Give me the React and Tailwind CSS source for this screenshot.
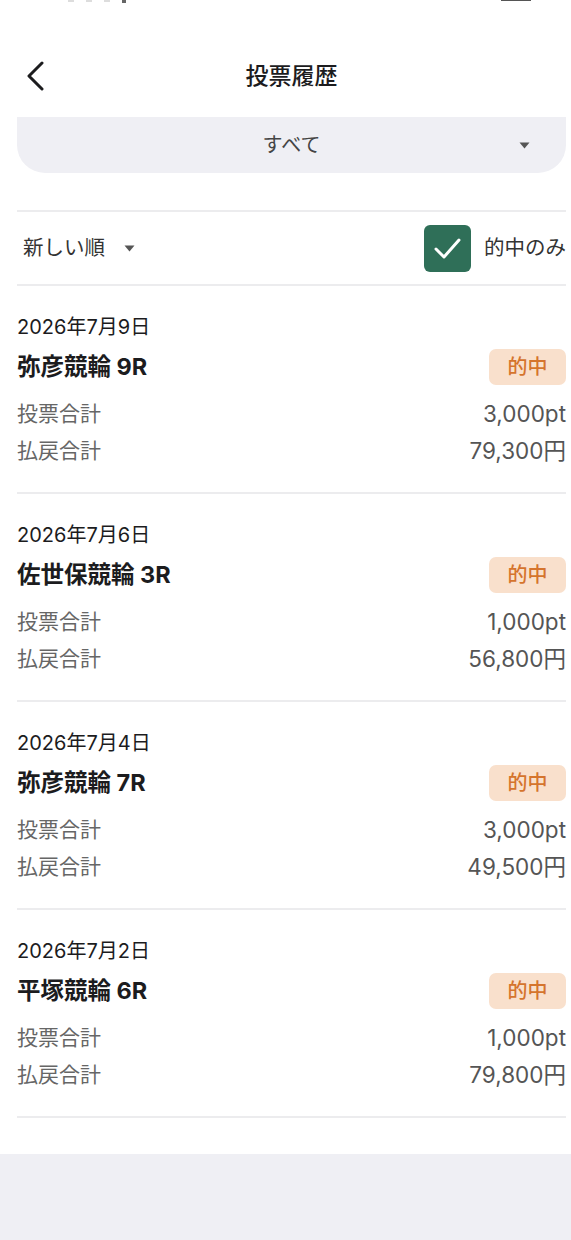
import React from 'react';

const history = [
    { date: '2026年7月9日', race: '弥彦競輪 9R', bet: '3,000pt', payout: '79,300円' },
    { date: '2026年7月6日', race: '佐世保競輪 3R', bet: '1,000pt', payout: '56,800円' },
    { date: '2026年7月4日', race: '弥彦競輪 7R', bet: '3,000pt', payout: '49,500円' },
    { date: '2026年7月2日', race: '平塚競輪 6R', bet: '1,000pt', payout: '79,800円' },
];

const Caret = () => (
    <svg width="11" height="7" viewBox="0 0 11 7">
        <path d="M0.5 0.5 H10.5 L5.5 6.5 Z" fill="#555" />
    </svg>
);

const HistoryItem = ({ item }) => (
    <div className="flex flex-col">
        <div className="mt-[27px] h-[28px] flex items-center text-[20px] text-[#1c1c1e]">
            {item.date}
        </div>
        <div className="mt-[8px] h-[36px] flex items-center justify-between">
            <span className="text-[23.5px] font-bold text-[#1c1c1e]">{item.race}</span>
            <span className="h-[36px] w-[77px] rounded-[7px] bg-[#f9e0cc] text-[#d5742d] text-[20px] font-medium flex items-center justify-center">
                的中
            </span>
        </div>
        <div className="mt-[10px] h-[37px] flex items-center justify-between text-[21px]">
            <span className="text-[#666]">投票合計</span>
            <span className="text-[22.5px] text-[#555]">{item.bet}</span>
        </div>
        <div className="h-[37px] flex items-center justify-between text-[21px]">
            <span className="text-[#666]">払戻合計</span>
            <span className="text-[22.5px] text-[#555]">{item.payout}</span>
        </div>
        <div className="mt-[23px] h-[2px] bg-[#ececee]" />
    </div>
);

const App = () => {
    return (
        <div
            className="min-h-[1240px] bg-[#efeff4]"
            style={{ fontFamily: '"Inter", "Noto Sans CJK JP", sans-serif' }}
        >
            <div className="bg-white pb-[36px]">
                {/* ステータスバーの切れ端 */}
                <div className="h-[48px] flex justify-between pl-[68px] pr-[40px]">
                    <div className="flex gap-[12px] h-[3px]">
                        <div className="w-[6px] h-[2px] bg-[#ddd]" />
                        <div className="w-[6px] h-[2px] bg-[#ddd]" />
                        <div className="w-[6px] h-[2px] bg-[#ddd]" />
                        <div className="w-[4px] h-[3px] bg-[#666]" />
                    </div>
                    <div className="w-[30px] h-[1px] bg-[#555]" />
                </div>

                {/* ヘッダー */}
                <div className="h-[56px] flex items-center relative">
                    <button className="ml-[24px] w-[24px] h-[32px] flex items-center justify-center">
                        <svg width="20" height="30" viewBox="0 0 20 30">
                            <path d="M16 2 L3 15 L16 28" fill="none" stroke="#1c1c1e" strokeWidth="3" strokeLinecap="round" strokeLinejoin="round" />
                        </svg>
                    </button>
                    <h1 className="absolute left-[17px] right-[5px] text-center text-[23px] font-medium text-[#1c1c1e] pointer-events-none">
                        投票履歴
                    </h1>
                </div>

                <div className="pl-[17px] pr-[5px]">
                    {/* カテゴリ選択 */}
                    <div className="mt-[13px] h-[56px] rounded-b-[28px] bg-[#efeff4] flex items-center relative">
                        <span className="absolute left-0 right-0 text-center text-[20px] text-[#444]">すべて</span>
                        <span className="ml-auto mr-[36px] flex">
                            <Caret />
                        </span>
                    </div>

                    <div className="mt-[37px] h-[2px] bg-[#ececee]" />

                    {/* 並び替え・フィルター */}
                    <div className="h-[72px] flex items-center justify-between">
                        <div className="flex items-center pl-[6px] gap-[19px]">
                            <span className="text-[20.5px] text-[#333]">新しい順</span>
                            <Caret />
                        </div>
                        <div className="flex items-center gap-[13px]">
                            <div className="w-[47px] h-[47px] rounded-[6px] bg-[#2f6f58] flex items-center justify-center">
                                <svg width="47" height="47" viewBox="0 0 47 47">
                                    <path d="M12 24 L20 32 L35 15" fill="none" stroke="white" strokeWidth="3" strokeLinecap="round" strokeLinejoin="round" />
                                </svg>
                            </div>
                            <span className="text-[20.5px] text-[#333]">的中のみ</span>
                        </div>
                    </div>

                    <div className="h-[2px] bg-[#ececee]" />

                    {history.map((item, i) => (
                        <HistoryItem key={i} item={item} />
                    ))}
                </div>
            </div>
        </div>
    );
};

export default App;
